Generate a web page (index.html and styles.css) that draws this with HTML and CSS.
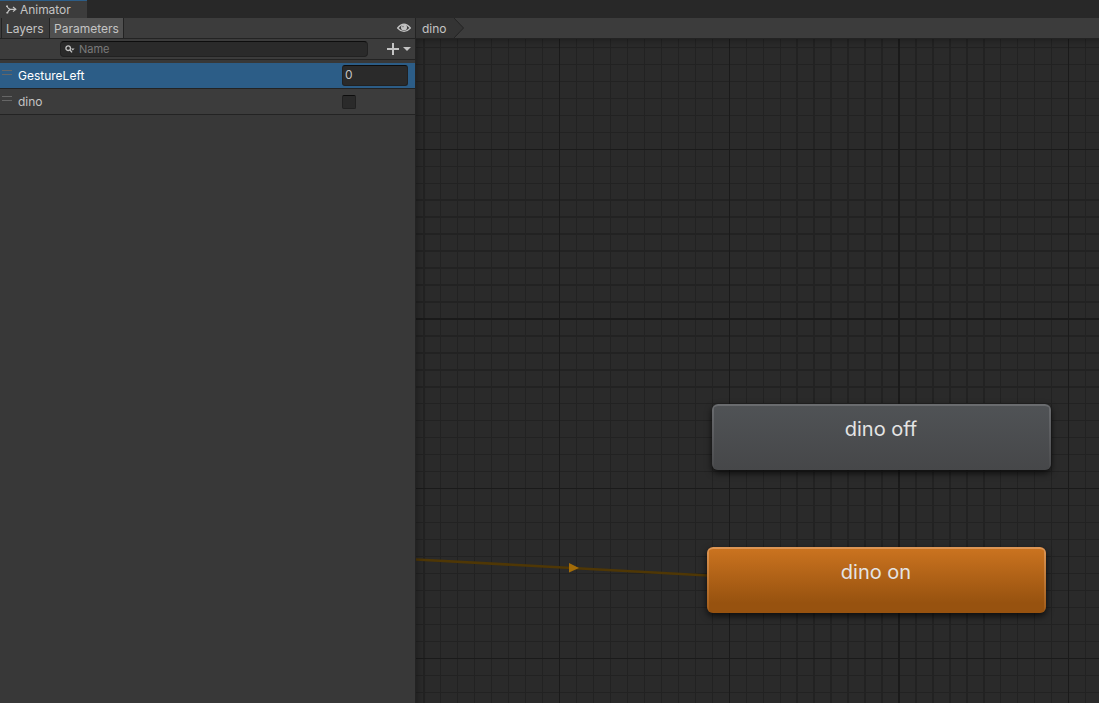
FILE: index.html
```html
<!DOCTYPE html>
<html lang="en">
<head>
  <meta charset="UTF-8" />
  <title>Animator</title>
  <link rel="stylesheet" href="styles.css">
</head>
<body>
  <div class="window">
    <div class="tabbar">
      <div class="tab">
        <svg width="12" height="10" viewBox="0 0 12 10" fill="none" stroke="#c4c4c4" stroke-width="1.2">
          <path d="M0.5 1 Q2.6 4.3 4.5 4.3 H9 M4.5 4.3 Q2.6 4.6 1.2 8" />
          <path d="M7 2L9.8 4.3L7 6.6" />
          <path d="M0.2 1.2h1.8M0.4 7.8h1.8" stroke-width="1.4" />
        </svg>
        <span>Animator</span>
      </div>
    </div>

    <div class="main">
      <div class="sidebar">
        <div class="toolbar">
          <div class="mode">Layers</div>
          <div class="mode active">Parameters</div>
          <svg class="eye" width="14" height="10" viewBox="0 0 14 10">
            <path d="M0.6 5 Q7 -2.6 13.4 5 Q7 12 0.6 5Z" fill="none" stroke="#c4c4c4" stroke-width="1.2" />
            <circle cx="7" cy="4.6" r="3" fill="#c4c4c4" />
            <circle cx="6" cy="3.6" r="0.8" fill="#777" />
          </svg>
        </div>
        <div class="searchbar">
          <div class="search">
            <svg width="10" height="9" viewBox="0 0 10 9">
              <circle cx="3.2" cy="3.2" r="2.3" fill="none" stroke="#c4c4c4" stroke-width="1.3" />
              <path d="M4.8 4.8L7 7.4" stroke="#c4c4c4" stroke-width="1.4" />
              <path d="M6 3.6h3.6L7.8 5.4z" fill="#c4c4c4" />
            </svg>
            <span>Name</span>
          </div>
          <svg class="add" width="25" height="12" viewBox="0 0 25 12">
            <path d="M0 6h12M6 0v12" stroke="#c4c4c4" stroke-width="2" />
            <path d="M16 4h8l-4 4z" fill="#c4c4c4" />
          </svg>
        </div>
        <div class="param selected">
          <i class="handle"></i>
          <span>GestureLeft</span>
          <div class="number">0</div>
        </div>
        <div class="param">
          <i class="handle"></i>
          <span>dino</span>
          <div class="checkbox"></div>
        </div>
      </div>

      <div class="graph">
        <div class="breadcrumb">
          <span>dino</span>
          <svg width="11" height="20" viewBox="0 0 11 20">
            <path d="M0 0L9.5 10L0 20z" fill="#343434" />
            <path d="M0 0L9.5 10L0 20" fill="none" stroke="#242424" />
          </svg>
        </div>
        <div class="canvas">
          <svg class="grid" id="grid" width="683" height="664"></svg>
          <svg class="link" width="683" height="664">
            <path d="M0 520.5L292 536.5" stroke="#4f3705" stroke-width="2.6" />
            <path d="M153 524L163 529L153 533.5z" fill="#a36c08" />
          </svg>
          <div class="state off">dino off</div>
          <div class="state on">dino on</div>
        </div>
      </div>
    </div>
  </div>

  <script>
    const grid = document.getElementById("grid");
    const step = 17;

    // lines in the middle of the run fall between two pixels
    function linePos(origin, n, first) {
      const p = origin + n * step;
      if (n < first) return [p, 1];
      if (n < first + 12 && n < 26) return [p - 1, 2];
      return [p - 1, 1];
    }

    let minor = "";
    let major = "";
    for (let n = -8; n <= 31; n++) {
      const [x, w] = n === -8 ? [7, 2] : linePos(143, n, 14);
      const rect = `<rect x="${x}" y="0" width="${w}" height="664" />`;
      if (n % 10 === 0) major += rect; else minor += rect;
    }
    for (let n = -6; n <= 32; n++) {
      const [y, h] = linePos(110, n, 3);
      const rect = `<rect x="0" y="${y}" width="683" height="${h}" />`;
      if (n % 10 === 0) major += rect; else minor += rect;
    }
    grid.innerHTML = `<g class="minor">${minor}</g><g class="major">${major}</g>`;
  </script>
</body>
</html>
```
FILE: styles.css
```css
body {
  margin: 0;
  background: #282828;
  color: #c4c4c4;
  font-family: Inter, sans-serif;
  font-size: 12px;
  overflow: hidden;
}
svg {
  display: block;
  flex: none;
}
.window {
  width: 1099px;
  height: 703px;
  display: flex;
  flex-direction: column;
}
.tabbar {
  height: 18px;
  background: #282828;
}
.tab {
  box-sizing: border-box;
  width: 87px;
  height: 18px;
  padding-left: 6px;
  display: flex;
  align-items: center;
  gap: 2px;
  background: #3c3c3c;
  border-top: 1px solid #2c5d87;
  letter-spacing: -0.05px;
}
.main {
  flex: 1;
  display: flex;
  min-height: 0;
}
.sidebar {
  box-sizing: border-box;
  width: 416px;
  background: #383838;
  border-right: 1px solid #232323;
}
.toolbar {
  box-sizing: border-box;
  height: 21px;
  display: flex;
  align-items: center;
  background: #3c3c3c;
  border-bottom: 1px solid #232323;
  padding: 0 4px 0 1px;
}
.mode {
  box-sizing: border-box;
  height: 20px;
  line-height: 22px;
  padding: 0 4px;
  border-left: 1px solid #232323;
  width: 48px;
}
.mode.active {
  width: 75px;
  background: #505050;
  border-right: 1px solid #232323;
}
.eye {
  margin-left: auto;
}
.searchbar {
  box-sizing: border-box;
  height: 21px;
  display: flex;
  align-items: center;
  background: #3c3c3c;
  border-bottom: 1px solid #232323;
  padding: 0 3px 0 60px;
}
.search {
  box-sizing: border-box;
  width: 308px;
  height: 16px;
  padding-left: 4px;
  display: flex;
  align-items: center;
  gap: 4px;
  background: #2a2a2a;
  border: 1px solid #212121;
  border-top-color: #0d0d0d;
  border-radius: 4px;
  color: #7b7b7b;
  font-size: 11px;
}
.add {
  margin-left: auto;
}
.param {
  box-sizing: border-box;
  height: 26px;
  display: flex;
  align-items: center;
  padding-left: 2px;
  background: #3c3c3c;
  border-bottom: 1px solid #232323;
}
.param span {
  width: 324px;
}
.param.selected {
  margin-top: 3px;
  background: #2c5d87;
  color: #fff;
}
.handle {
  box-sizing: border-box;
  width: 10px;
  height: 5px;
  margin: -6px 6px 0 0;
  border-top: 1px solid #666;
  border-bottom: 1px solid #666;
}
.number {
  box-sizing: border-box;
  width: 66px;
  height: 21px;
  line-height: 18px;
  padding-left: 2px;
  background: #2a2a2a;
  border: 1px solid #212121;
  border-top-color: #0d0d0d;
  border-radius: 3px;
  color: #c4c4c4;
}
.checkbox {
  box-sizing: border-box;
  width: 14px;
  height: 14px;
  background: #2a2a2a;
  border: 1px solid #212121;
  border-top-color: #0d0d0d;
  border-radius: 2px;
}
.graph {
  flex: 1;
  display: flex;
  flex-direction: column;
}
.breadcrumb {
  box-sizing: border-box;
  height: 21px;
  display: flex;
  background: #3c3c3c;
  border-bottom: 1px solid #232323;
}
.breadcrumb span {
  box-sizing: border-box;
  width: 38px;
  padding-left: 6px;
  line-height: 22px;
  background: #343434;
}
.canvas {
  position: relative;
  flex: 1;
  background: #2a2a2a;
  overflow: hidden;
}
.canvas::after {
  content: "";
  position: absolute;
  inset: 0 -20px -20px 0;
  box-shadow: inset 0 0 8px rgba(0, 0, 0, 0.4);
}
.grid,
.link {
  position: absolute;
  left: 0;
  top: 0;
}
.minor {
  fill: #222;
}
.major {
  fill: #1a1a1a;
}
.state {
  box-sizing: border-box;
  position: absolute;
  width: 339px;
  height: 66px;
  padding-right: 1px;
  line-height: 50px;
  text-align: center;
  font-size: 20px;
  color: #e4e4e4;
  border-radius: 6px;
}
/* the side highlights fade out towards the bottom */
.state.off {
  left: 296px;
  top: 365px;
  background:
    linear-gradient(#6a6c6f, #4a4b4d) left / 2px 100% no-repeat,
    linear-gradient(#6a6c6f, #4a4b4d) right / 2px 100% no-repeat,
    linear-gradient(#505356, #464749);
  box-shadow: inset 0 2px #6a6c6f, 0 3px 7px rgba(0, 0, 0, 0.7);
}
.state.on {
  left: 291px;
  top: 508px;
  background:
    linear-gradient(#dd9655, #a05a17) left / 2px 100% no-repeat,
    linear-gradient(#dd9655, #a05a17) right / 2px 100% no-repeat,
    linear-gradient(#cc7420, #97520f 85%);
  box-shadow: inset 0 2px #dd9655, 0 3px 7px rgba(0, 0, 0, 0.7);
}
```
